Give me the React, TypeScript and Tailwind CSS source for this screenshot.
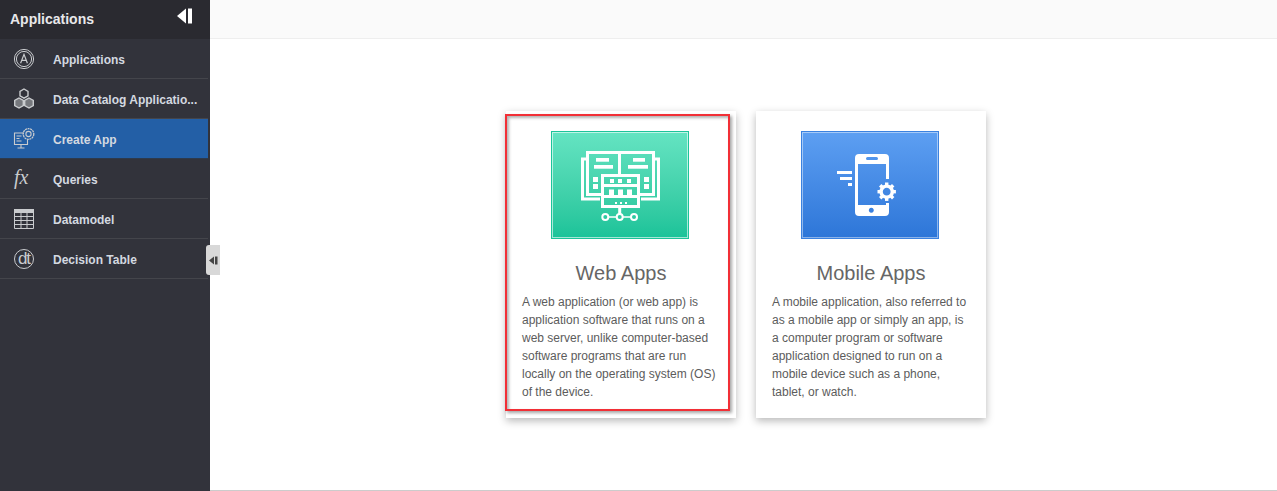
import React from "react";

const Ic = ({ children }: { children: React.ReactNode }) => (
  <svg width="24" height="24" viewBox="0 0 24 24" fill="none" stroke="#c9cbce" strokeWidth="1" className="shrink-0">
    {children}
  </svg>
);

const AppsIcon = () => (
  <Ic>
    <circle cx="12" cy="12" r="9.6" />
    <circle cx="12" cy="12" r="7.6" />
    <path d="M8.6 16.2 12 7.4 15.4 16.2M9.6 13.4h4.8" strokeWidth="1.2" />
  </Ic>
);
const HexIcon = () => (
  <Ic>
    <path d="M12 2l4 2.3v4.6l-4 2.3-4-2.3V4.300z" strokeWidth="1.4" />
    <path d="M7 11l4.300 2.400v5.200L7 21l-4.300-2.400v-5.200z" fill="#c9cbce" fillOpacity=".45" strokeWidth="1.4" />
    <path d="M17 11l4.300 2.400v5.200L17 21l-4.300-2.400v-5.200z" fill="#c9cbce" fillOpacity=".45" strokeWidth="1.4" />
  </Ic>
);
const CreateIcon = () => (
  <Ic>
    <path d="M12 6H2.500v11.500h13V13" strokeWidth="1.100" />
    <path d="M4.500 9h5M4.500 11.500h3M4.500 14h5M9 17.500v3M5.500 21h7" strokeWidth="1.100" />
    <circle cx="16.500" cy="7" r="5.300" strokeDasharray="2 .6" strokeWidth="1.300" />
    <circle cx="16.500" cy="7" r="2.600" strokeWidth="1.100" />
  </Ic>
);
const FxIcon = () => (
  <span className="w-6 -mt-[3px] pl-[2px] shrink-0 text-left text-[20px] leading-6 italic text-[#c9cbce] font-['Liberation_Serif',serif]">
    fx
  </span>
);
const TableIcon = () => (
  <Ic>
    <rect x="2" y="2" width="20" height="4" fill="#c9cbce" stroke="none" />
    <path d="M2.500 2.500h19v19h-19zM2.500 9.500h19M2.500 13.500h19M2.500 17.500h19M9 6v15.500M15 6v15.500" />
  </Ic>
);
const DtIcon = () => (
  <span className="relative w-5 h-5 mx-[2px] shrink-0 rounded-full border-[1.5px] border-[#c9cbce] flex items-center justify-center overflow-hidden">
    <span className="-mt-px text-[17px] leading-none text-[#c9cbce] font-['Liberation_Sans',sans-serif] tracking-[-1px]">dt</span>
  </span>
);

const items = [
  { label: "Applications", icon: <AppsIcon /> },
  { label: "Data Catalog Applicatio...", icon: <HexIcon /> },
  { label: "Create App", icon: <CreateIcon />, active: true },
  { label: "Queries", icon: <FxIcon /> },
  { label: "Datamodel", icon: <TableIcon /> },
  { label: "Decision Table", icon: <DtIcon /> },
];

const WebIcon = () => (
  <svg width="136" height="106" viewBox="1 1 136 106" fill="none" stroke="#fff" strokeWidth="3">
    <path d="M50 63.500H36.500V21.500H102.500V63.500H89M68.500 21.500V43" />
    <path d="M35 28H31.500V68H49M104 28H107.500V68H90" />
    <rect x="51.500" y="44.500" width="36" height="31" />
    <path d="M51 54.500H88M51 65.500H88" />
    <path d="M68.700 77V83" />
    <path d="M57 86H66M71.500 86H80" strokeWidth="1.600" />
    <circle cx="54.300" cy="86" r="3" strokeWidth="2" />
    <circle cx="68.700" cy="86" r="3" strokeWidth="2" />
    <circle cx="83" cy="86" r="3" strokeWidth="2" />
    <g fill="#fff" stroke="none">
      <rect x="59" y="48" width="4" height="4" />
      <rect x="67" y="48" width="4" height="4" />
      <rect x="76" y="48" width="4" height="4" />
      <rect x="58" y="58.500" width="5" height="5.500" />
      <rect x="67" y="58.500" width="5" height="5.500" />
      <rect x="76" y="58.500" width="5" height="5.500" />
      <rect x="64" y="71" width="2" height="2" />
      <rect x="69" y="71" width="2" height="2" />
      <rect x="74" y="71" width="2" height="2" />
      <rect x="45" y="27" width="13" height="3.700" />
      <rect x="43" y="34" width="19" height="3.700" />
      <rect x="82" y="27" width="12" height="3.700" />
      <rect x="77" y="34" width="20" height="3.700" />
      <rect x="42" y="46" width="5" height="5" />
      <rect x="42" y="53" width="5" height="5" />
      <rect x="93" y="46" width="5" height="5" />
      <rect x="93" y="53" width="5" height="5" />
    </g>
  </svg>
);

const MobileIcon = () => (
  <svg width="136" height="106" viewBox="1 1 136 106" fill="none">
    <path
      fill="#fff"
      fillRule="evenodd"
      d="M58 23H84a4 4 0 0 1 4 4V48H85V33H57V74H85V72H88V81a4 4 0 0 1-4 4H58a4 4 0 0 1-4-4V27a4 4 0 0 1 4-4ZM66.500 26a1.500 1.500 0 0 0 0 3H75.500a1.500 1.500 0 0 0 0-3ZM70.300 76.800a2.500 2.500 0 1 0 .01 0Z"
    />
    <g fill="#fff">
      <rect x="36" y="40" width="15" height="3" />
      <rect x="39" y="46" width="12" height="3" />
      <rect x="47" y="52" width="4" height="3" />
    </g>
    <g transform="translate(85.700 60.700)">
      <circle r="5.600" stroke="#fff" strokeWidth="3.400" />
      {[0, 45, 90, 135, 180, 225, 270, 315].map((a) => (
        <rect key={a} x="-1.700" y="-9.200" width="3.400" height="3" fill="#fff" transform={`rotate(${a})`} />
      ))}
    </g>
  </svg>
);

const Card = ({
  title,
  text,
  icon,
  imgClass,
  children,
}: {
  title: string;
  text: string;
  icon: React.ReactNode;
  imgClass: string;
  children?: React.ReactNode;
}) => (
  <div className="relative w-[230px] h-[307px] bg-white shadow-[0_3px_8px_rgba(0,0,0,0.28)] px-4 pt-5">
    <div className={`w-[138px] h-[108px] ml-[29px] border ${imgClass}`}>{icon}</div>
    <h2 className="mt-[22px] text-center text-[20px] leading-[24px] font-normal text-[#666]">{title}</h2>
    <p className="mt-[8px] text-[12px] leading-[18px] text-[#5c5c5c]">{text}</p>
    {children}
  </div>
);

export default function App() {
  return (
    <div className="relative flex w-[1277px] h-[491px] overflow-hidden bg-white font-['Liberation_Sans',Arial,sans-serif]">
      <aside className="relative w-[210px] shrink-0 bg-[#32333b]">
        <div className="h-[39px] bg-[#2a2a30] flex items-center justify-between pl-[10px] pr-[17px]">
          <span className="text-[14px] font-bold text-[#e8e8ea]">Applications</span>
          <svg width="16" height="16" viewBox="0 0 16 16" fill="#fff" className="-mt-[7px]">
            <path d="M0 8 9 .5V15.500Z" />
            <rect x="11" y="0.500" width="4" height="15" />
          </svg>
        </div>
        <nav className="w-[208px]">
          {items.map((it) => (
            <div
              key={it.label}
              className={`h-[40px] flex items-center gap-[17px] pl-[12px] border-b ${
                it.active ? "bg-[#235fa6] border-[#2d3a4d]" : "border-[#44454b]"
              }`}
            >
              {it.icon}
              <span className="pt-[2px] text-[12px] font-bold text-[#d4d9e0] whitespace-nowrap">{it.label}</span>
            </div>
          ))}
        </nav>
        <div className="absolute left-[206px] top-[245px] w-[14px] h-[30px] rounded-l-[3px] bg-[#d8d8d8] flex items-center justify-center">
          <svg width="9" height="9" viewBox="0 0 9 9" fill="#444">
            <path d="M0 4.500 5 .5V8.500Z" />
            <rect x="6" y="0.500" width="2.500" height="8" />
          </svg>
        </div>
      </aside>
      <main className="flex-1 flex flex-col">
        <div className="h-[39px] bg-[#fafafa] border-b border-[#eeeeee]" />
        <div className="flex-1 flex gap-5 pl-[296px] pt-[72px] border-b border-[#cccccc]">
          <Card
            title="Web Apps"
            icon={<WebIcon />}
            imgClass="bg-linear-to-b from-[#64e4c2] to-[#18c399] border-[#1cc49a] shadow-[inset_0_0_0_1px_rgba(255,255,255,0.6)]"
            text="A web application (or web app) is application software that runs on a web server, unlike computer-based software programs that are run locally on the operating system (OS) of the device."
          >
            <div className="absolute left-[-1px] top-[3px] w-[225px] h-[297px] border-[2px] border-[#f22f36] shadow-[2px_2px_3px_rgba(0,0,0,0.35),inset_2px_2px_3px_rgba(0,0,0,0.3)]" />
          </Card>
          <Card
            title="Mobile Apps"
            icon={<MobileIcon />}
            imgClass="bg-linear-to-b from-[#5d9ff2] to-[#2d76d8] border-[#3b82e0] shadow-[inset_0_0_0_1px_rgba(255,255,255,0.45)]"
            text="A mobile application, also referred to as a mobile app or simply an app, is a computer program or software application designed to run on a mobile device such as a phone, tablet, or watch."
          />
        </div>
      </main>
    </div>
  );
}
